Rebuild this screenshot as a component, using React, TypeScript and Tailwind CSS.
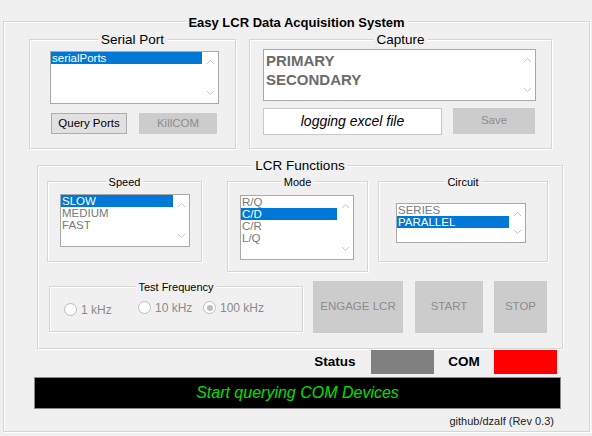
import React from "react";

function Chevron({ up }: { up: boolean }) {
  return (
    <svg width="9" height="6" viewBox="0 0 9 6" className="block">
      <polyline
        points={up ? "1,5 4.5,1.5 8,5" : "1,1 4.5,4.5 8,1"}
        fill="none"
        stroke="#c4c4c4"
        strokeWidth="1"
      />
    </svg>
  );
}

function Group({
  title,
  className,
  titleClass,
  children,
}: {
  title: string;
  className: string;
  titleClass: string;
  children?: React.ReactNode;
}) {
  return (
    <div className={`relative shrink-0 border border-[#d5d5d5] shadow-[inset_1px_1px_0_#ffffff,1px_1px_0_#ffffff] ${className}`}>
      <span
        className={`absolute left-1/2 top-0 -translate-x-1/2 -translate-y-1/2 whitespace-nowrap bg-[#f0f0f0] px-[3px] leading-none ${titleClass}`}
      >
        {title}
      </span>
      {children}
    </div>
  );
}

function ListBox({
  items,
  selected,
  className,
  chevPad,
}: {
  items: string[];
  selected: number;
  className: string;
  chevPad: string;
}) {
  return (
    <div className={`flex shrink-0 border border-[#a8a8a8] bg-white ${className}`}>
      <div className="flex flex-1 flex-col">
        {items.map((it, i) => (
          <div
            key={it}
            className={
              i === selected
                ? "h-[12px] bg-[#0078d7] pl-[1px] text-[11.5px] leading-[12px] text-white"
                : "h-[12px] pl-[1px] text-[11.5px] leading-[12px] text-[#7a7a7a]"
            }
          >
            {it}
          </div>
        ))}
      </div>
      <div className={`flex w-[16px] flex-col items-center justify-between ${chevPad}`}>
        <Chevron up />
        <Chevron up={false} />
      </div>
    </div>
  );
}

function Radio({ label, checked, className }: { label: string; checked?: boolean; className: string }) {
  return (
    <div className={`flex shrink-0 items-center gap-[4px] ${className}`}>
      <div className="flex h-[13px] w-[13px] items-center justify-center rounded-full border border-[#bcbcbc] bg-white">
        {checked ? <div className="h-[6px] w-[6px] rounded-full bg-[#bcbcbc]" /> : null}
      </div>
      <span className="text-[12px] leading-none text-[#8a8a8a]">{label}</span>
    </div>
  );
}

export default function App() {
  return (
    <div className="h-[436px] w-[592px] overflow-hidden bg-[#f0f0f0] pl-[3px] pt-[21px] font-['Liberation_Sans',Arial,sans-serif] text-black">
      <Group
        title="Easy LCR Data Acquisition System"
        className="h-[411px] w-[587px]"
        titleClass="text-[13px] font-bold text-black"
      >
        {/* top row */}
        <div className="ml-[25px] mt-[17px] flex gap-[13px]">
          <Group title="Serial Port" className="h-[110px] w-[207px]" titleClass="text-[13.5px]">
            <ListBox
              items={["serialPorts"]}
              selected={0}
              className="ml-[20px] mt-[11px] h-[53px] w-[169px]"
              chevPad="py-[7px]"
            />
            <div className="ml-[21px] mt-[9px] flex gap-[12px]">
              <div className="flex h-[21px] w-[76px] items-center justify-center border border-[#adadad] bg-[#e1e1e1] text-[11.5px]">
                Query Ports
              </div>
              <div className="flex h-[21px] w-[78px] items-center justify-center bg-[#cccccc] text-[11.5px] text-[#8c8c8c]">
                KillCOM
              </div>
            </div>
          </Group>
          <Group title="Capture" className="h-[110px] w-[303px]" titleClass="text-[13.5px]">
            <div className="ml-[13px] mt-[9px] flex h-[52px] w-[273px] border border-[#a8a8a8] bg-white">
              <div className="flex-1 pl-[2px] pt-[1px] text-[15px] font-bold leading-[19px] text-[#6b6b6b]">
                <div>PRIMARY</div>
                <div>SECONDARY</div>
              </div>
              <div className="flex w-[16px] flex-col items-center justify-between py-[7px]">
                <Chevron up />
                <Chevron up={false} />
              </div>
            </div>
            <div className="ml-[13px] mt-[7px] flex gap-[11px]">
              <div className="flex h-[27px] w-[179px] items-center justify-center border border-[#c8c8c8] bg-white text-[14px] italic">
                logging excel file
              </div>
              <div className="flex h-[26px] w-[82px] items-center justify-center bg-[#cccccc] text-[11.5px] text-[#8c8c8c]">
                Save
              </div>
            </div>
          </Group>
        </div>

        {/* LCR functions */}
        <Group title="LCR Functions" className="ml-[33px] mt-[16px] h-[184px] w-[526px]" titleClass="text-[13.5px]">
          <div className="flex items-start">
            <Group title="Speed" className="ml-[9px] mt-[15px] h-[81px] w-[155px]" titleClass="text-[11px]">
              <ListBox
                items={["SLOW", "MEDIUM", "FAST"]}
                selected={0}
                className="ml-[12px] mt-[12px] h-[53px] w-[130px]"
                chevPad="py-[7px]"
              />
            </Group>
            <Group title="Mode" className="ml-[25px] mt-[15px] h-[91px] w-[141px]" titleClass="text-[11px]">
              <ListBox
                items={["R/Q", "C/D", "C/R", "L/Q"]}
                selected={1}
                className="ml-[12px] mt-[13px] h-[65px] w-[114px]"
                chevPad="py-[7px]"
              />
            </Group>
            <Group title="Circuit" className="ml-[10px] mt-[15px] h-[81px] w-[170px]" titleClass="text-[11px]">
              <ListBox
                items={["SERIES", "PARALLEL"]}
                selected={1}
                className="ml-[17px] mt-[21px] h-[40px] w-[130px]"
                chevPad="py-[7px]"
              />
            </Group>
          </div>
          <div className="mt-[9px] flex items-start">
            <Group title="Test Frequency" className="ml-[11px] mt-[5px] h-[46px] w-[254px]" titleClass="text-[11px]">
              <div className="ml-[14px] mt-[14px] flex items-start">
                <Radio label="1 kHz" className="mt-[2px] w-[74px]" />
                <Radio label="10 kHz" className="w-[65px]" />
                <Radio label="100 kHz" checked className="w-[70px]" />
              </div>
            </Group>
            <div className="ml-[10px] flex h-[52px] w-[90px] shrink-0 items-center justify-center bg-[#cccccc] text-[11.5px] text-[#8c8c8c]">
              ENGAGE LCR
            </div>
            <div className="ml-[12px] flex h-[52px] w-[68px] shrink-0 items-center justify-center bg-[#cccccc] text-[11.5px] text-[#8c8c8c]">
              START
            </div>
            <div className="ml-[11px] flex h-[52px] w-[53px] shrink-0 items-center justify-center bg-[#cccccc] text-[11.5px] text-[#8c8c8c]">
              STOP
            </div>
          </div>
        </Group>

        {/* status row */}
        <div className="ml-[301px] mt-[1px] flex items-center">
          <div className="w-[60px] text-center text-[13.5px] font-bold">Status</div>
          <div className="ml-[6px] h-[24px] w-[63px] bg-[#808080]" />
          <div className="w-[60px] text-center text-[13.5px] font-bold">COM</div>
          <div className="h-[24px] w-[63px] bg-[#ff0000]" />
        </div>

        {/* message bar */}
        <div className="ml-[30px] mt-[3px] flex h-[32px] w-[527px] items-center justify-center border border-[#8a8a8a] bg-black text-[16px] italic text-[#00e000]">
          Start querying COM Devices
        </div>

        <div className="ml-[30px] mt-[5px] w-[520px] text-right text-[11px] leading-[14px] text-[#222]">
          github/dzalf (Rev 0.3)
        </div>
      </Group>
    </div>
  );
}
